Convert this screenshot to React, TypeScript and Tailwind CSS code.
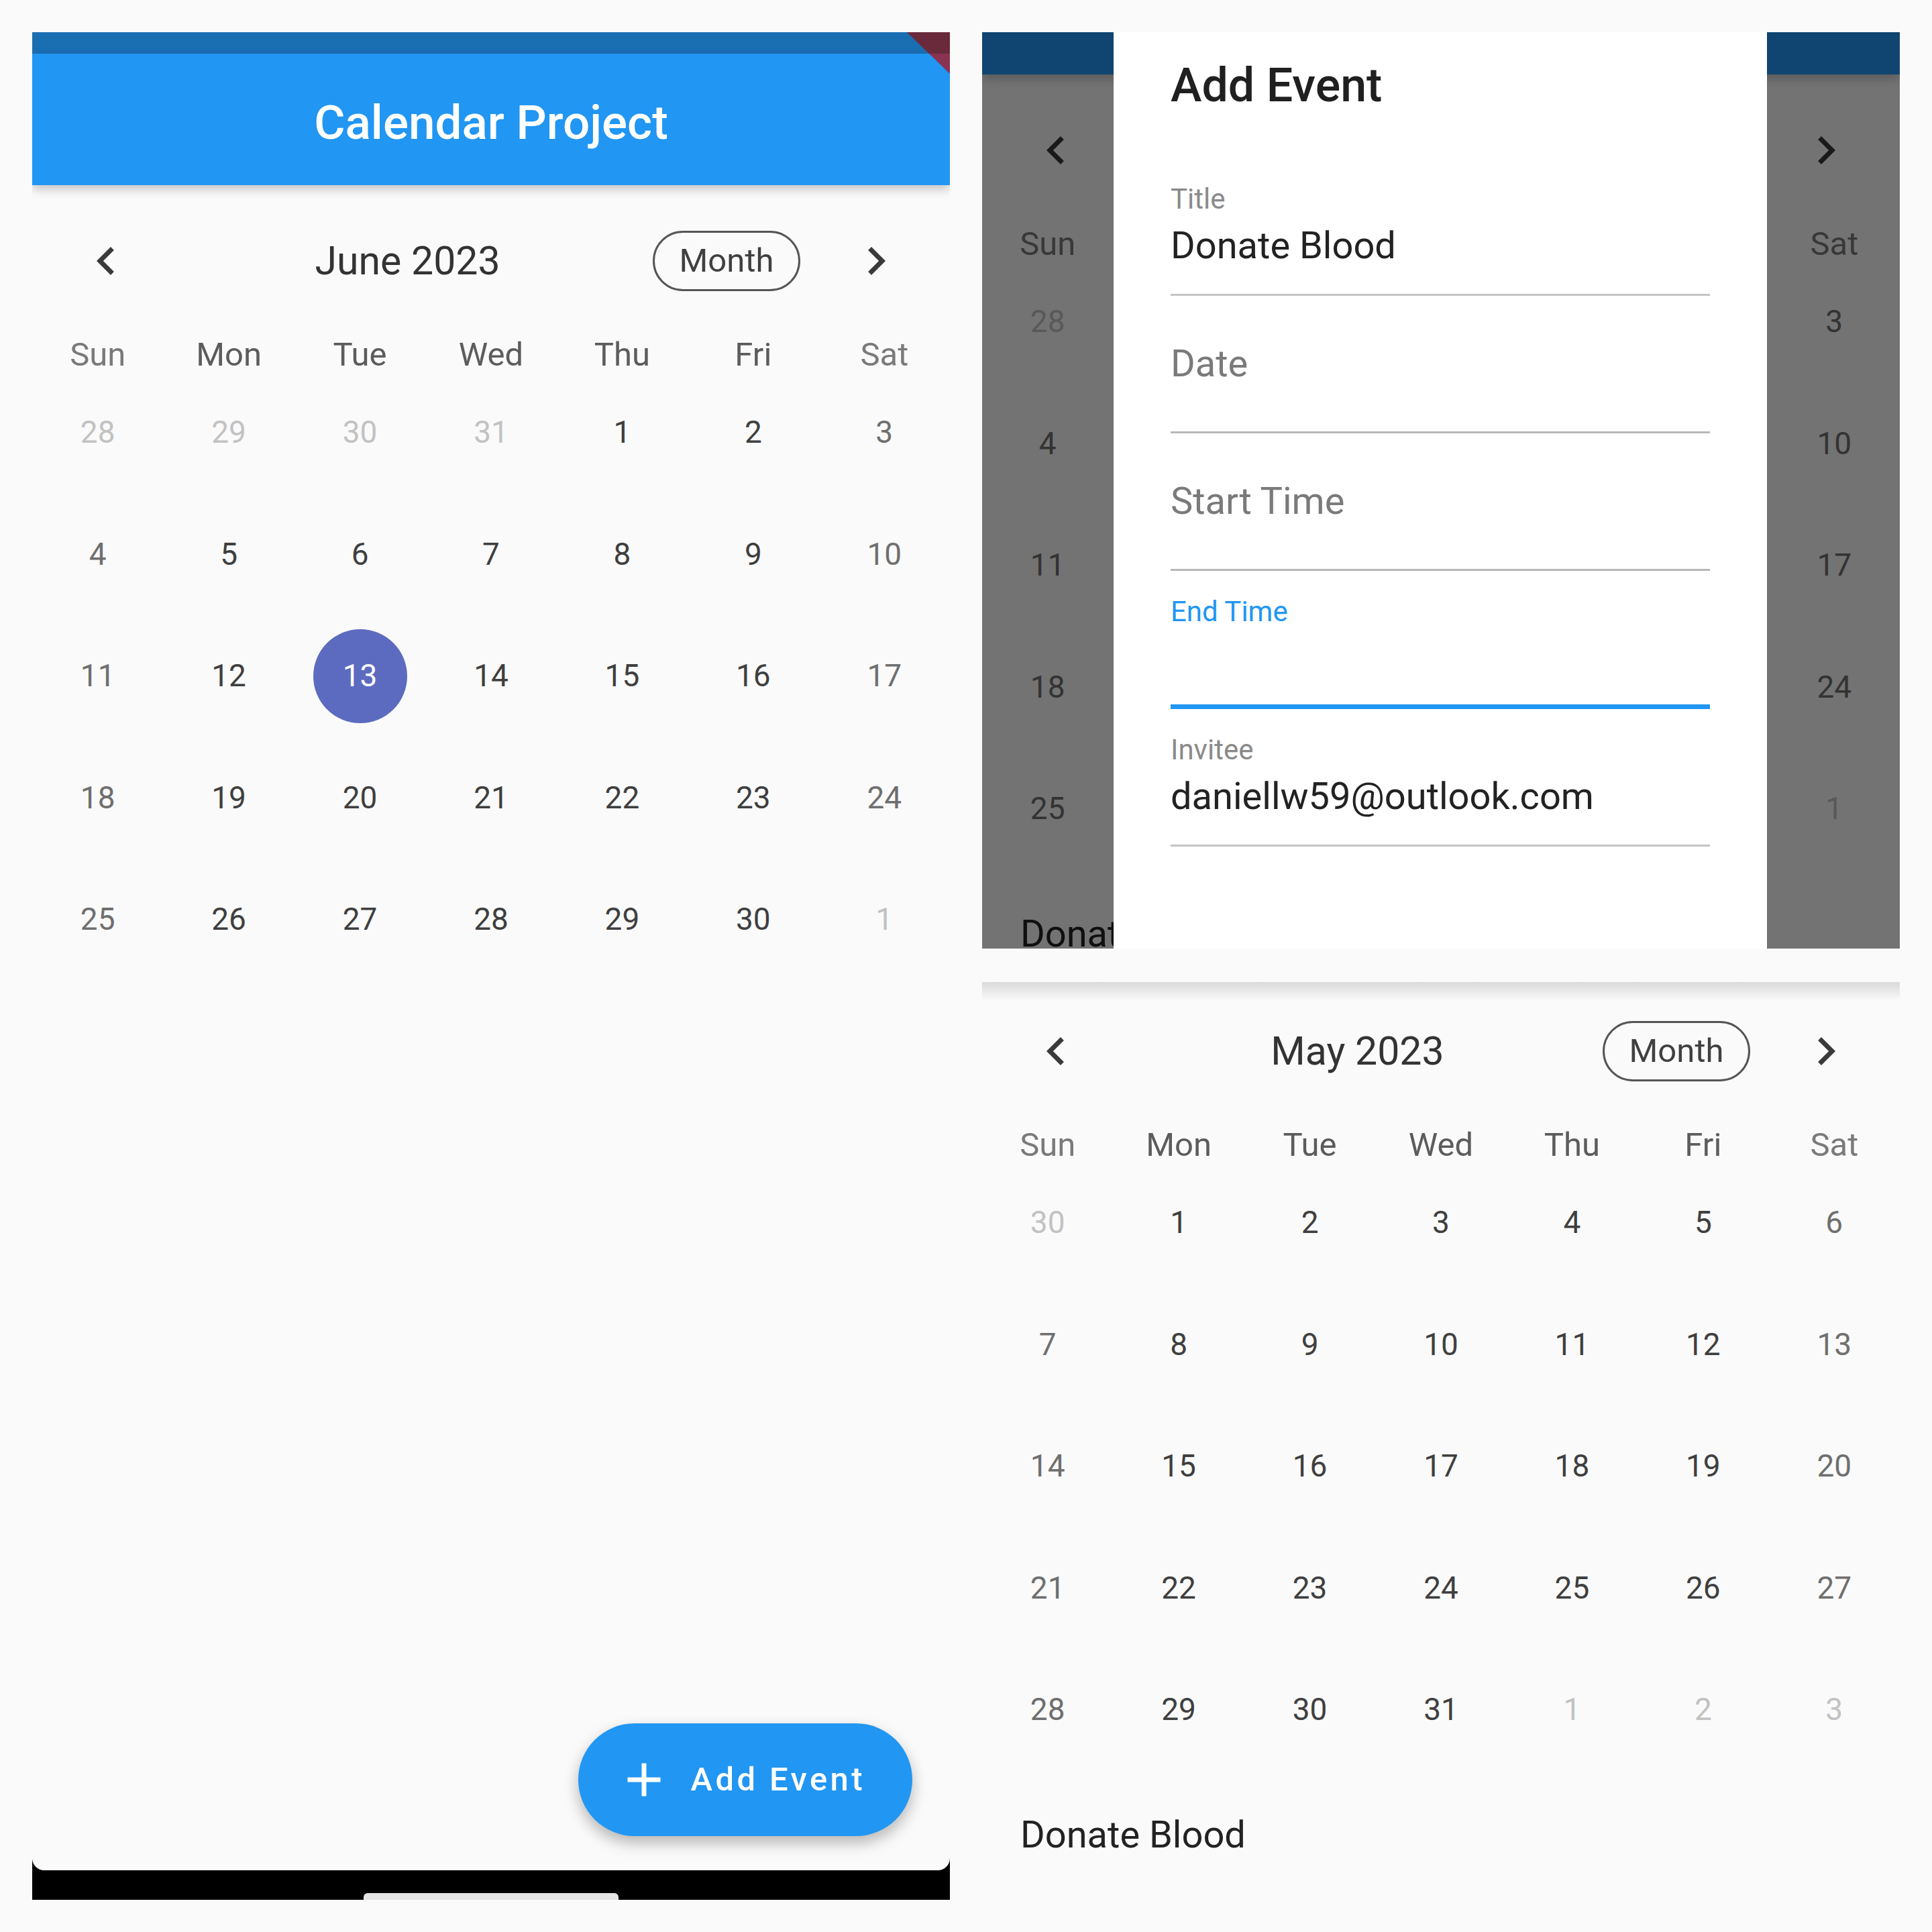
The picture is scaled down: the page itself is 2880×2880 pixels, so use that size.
import type { ReactNode } from 'react';

type Cell = { d: number; out?: boolean };

// builds the weeks of a month grid, Sunday first
function monthWeeks(prevLen: number, offset: number, len: number): Cell[][] {
  const cells: Cell[] = [];
  for (let i = offset; i > 0; i--) cells.push({ d: prevLen - i + 1, out: true });
  for (let d = 1; d <= len; d++) cells.push({ d });
  let n = 1;
  while (cells.length % 7) cells.push({ d: n++, out: true });
  const weeks: Cell[][] = [];
  for (let i = 0; i < cells.length; i += 7) weeks.push(cells.slice(i, i + 7));
  return weeks;
}

const JUNE = monthWeeks(31, 4, 30);
const MAY = monthWeeks(30, 1, 31);
const DAYS = ['Sun', 'Mon', 'Tue', 'Wed', 'Thu', 'Fri', 'Sat'];

function ChevronLeft() {
  return (
    <svg viewBox="0 0 24 24" className="h-[84px] w-[84px] fill-[#3a3a3a]">
      <path d="M15.41 7.41L14 6l-6 6 6 6 1.41-1.41L10.83 12z" />
    </svg>
  );
}

function ChevronRight() {
  return (
    <svg viewBox="0 0 24 24" className="h-[84px] w-[84px] fill-[#3a3a3a]">
      <path d="M10 6L8.59 7.41 13.17 12l-4.58 4.59L10 18l6-6z" />
    </svg>
  );
}

function Calendar({
  title,
  weeks,
  selected,
  event,
  covered,
  className,
}: {
  readonly title: string;
  readonly weeks: Cell[][];
  readonly selected?: number;
  readonly event?: string;
  readonly covered?: boolean; // middle columns sit under the dialog
  readonly className: string;
}) {
  const hide = (i: number) => (covered && i > 0 && i < 6 ? 'invisible' : '');
  return (
    <div className={className}>
      <div className="flex h-[100px] items-center px-[26px]">
        <div className="flex w-[168px] justify-center">
          <ChevronLeft />
        </div>
        <div className={`flex-1 text-center text-[59px] text-[#333333] ${covered ? 'invisible' : ''}`}>{title}</div>
        <div
          className={`flex h-[90px] w-[220px] items-center justify-center rounded-full border-[3px] border-[#555555] text-[49px] text-[#404040] ${covered ? 'invisible' : ''}`}
        >
          Month
        </div>
        <div className="ml-[29px] flex w-[168px] justify-center">
          <ChevronRight />
        </div>
      </div>
      <div className="mt-[65px] grid h-[50px] grid-cols-7 items-center text-center text-[49px] leading-[50px]">
        {DAYS.map((day, i) => (
          <span key={day} className={`${i === 0 || i === 6 ? 'text-[#7a7a7a]' : 'text-[#5c5c5c]'} ${hide(i)}`}>
            {day}
          </span>
        ))}
      </div>
      {weeks.map((week, w) => (
        <div key={w} className="grid grid-cols-7">
          {week.map((cell, i) => {
            const isSel = !cell.out && cell.d === selected;
            const tone = cell.out
              ? 'text-[#c2c2c2]'
              : i === 0 || i === 6
                ? 'text-[#6f6f6f]'
                : 'text-[#3f3f3f]';
            return (
              <div key={i} className={`flex h-[181.5px] items-center justify-center text-[46px] ${hide(i)}`}>
                {isSel ? (
                  <span className="flex h-[140px] w-[140px] items-center justify-center rounded-full bg-[#5c6bc0] text-white">
                    {cell.d}
                  </span>
                ) : (
                  <span className={tone}>{cell.d}</span>
                )}
              </div>
            );
          })}
        </div>
      ))}
      {event && (
        <p className="mt-[67px] pl-[57px] text-[56px] leading-[56px] text-[#222222]">
          {covered ? 'Donat' : event}
        </p>
      )}
    </div>
  );
}

function Field({
  label,
  value,
  state,
}: {
  readonly label: string;
  readonly value?: string;
  readonly state: 'filled' | 'empty' | 'focused';
}) {
  if (state === 'empty') {
    return (
      <div className="h-[205px] border-b-[3px] border-[#b8b8b8] pt-[73px] text-[56px] leading-[56px] text-[#7a7a7a]">
        {label}
      </div>
    );
  }
  const focused = state === 'focused';
  return (
    <div
      className={
        focused
          ? 'h-[206px] border-b-[7px] border-[#2196f3] pt-[40px]'
          : 'h-[205px] border-b-[3px] border-[#c4c4c4] pt-[40px]'
      }
    >
      <div className={focused ? 'text-[42px] leading-[42px] text-[#2196f3]' : 'text-[42px] leading-[42px] text-[#8a8a8a]'}>
        {label}
      </div>
      {value && <div className="mt-[20px] text-[56px] leading-[56px] text-[#222222]">{value}</div>}
    </div>
  );
}

function Panel({ children, className }: { readonly children: ReactNode; readonly className: string }) {
  return <section className={`relative w-[1368px] overflow-hidden bg-[#fafafa] ${className}`}>{children}</section>;
}

export default function App() {
  return (
    <div className="flex h-[2880px] w-[2880px] gap-[48px] bg-[#fafafa] p-[48px] font-['Roboto',sans-serif]">
      {/* phone 1: month view with the FAB */}
      <section className="relative flex h-[2784px] w-[1368px] flex-col overflow-hidden bg-black">
        <div className="h-[32px] bg-[#1a6fb3]" />
        <header className="relative z-10 flex h-[196px] items-center justify-center bg-[#2196f3] pt-[10px] shadow-[0_6px_14px_rgba(0,0,0,0.22)]">
          <h1 className="text-[71px] font-medium text-white">Calendar Project</h1>
        </header>
        <main className="relative flex-1 rounded-b-[18px] bg-[#fafafa]">
          <Calendar className="pt-[63px]" title="June 2023" weeks={JUNE} selected={13} />
          <button
            type="button"
            className="absolute bottom-[51px] right-[56px] flex h-[168px] items-center rounded-full bg-[#2196f3] pl-[56px] pr-[70px] shadow-[0_10px_22px_rgba(0,0,0,0.28)]"
          >
            <svg viewBox="0 0 24 24" className="h-[84px] w-[84px] fill-white">
              <path d="M19 13h-6v6h-2v-6H5v-2h6V5h2v6h6v2z" />
            </svg>
            <span className="ml-[28px] text-[49px] font-medium tracking-[4.4px] text-white">Add Event</span>
          </button>
        </main>
        <div className="flex h-[44px] items-end justify-center">
          <div className="h-[10px] w-[380px] rounded-t-[6px] bg-[#e4e4e4]" />
        </div>
        <svg viewBox="0 0 64 62" className="absolute right-0 top-0 z-20 h-[62px] w-[64px]">
          <polygon points="0,0 64,0 64,62" fill="#8a3251" />
          <polygon points="0,0 64,0 64,32 33,32" fill="#6a2a3c" />
        </svg>
      </section>

      <div className="flex flex-col gap-[50px]">
        {/* phone 2: add event dialog */}
        <Panel className="h-[1366px]">
          <div className="relative z-10 h-[63px] bg-[#2196f3] shadow-[0_6px_14px_rgba(0,0,0,0.22)]" />
          <Calendar className="pt-[63px]" title="June 2023" weeks={JUNE} event="Donate Blood" covered />
          <div className="absolute inset-0 z-20 bg-black/[0.54]" />
          <div className="absolute inset-y-0 left-[196px] z-30 w-[974px] bg-white px-[85px] pt-[44px]">
            <h2 className="text-[70px] font-medium leading-[70px] text-[#202020]">Add Event</h2>
            <div className="mt-[74px]">
              <Field label="Title" value="Donate Blood" state="filled" />
              <Field label="Date" state="empty" />
              <Field label="Start Time" state="empty" />
              <Field label="End Time" state="focused" />
              <Field label="Invitee" value="daniellw59@outlook.com" state="filled" />
            </div>
          </div>
        </Panel>

        {/* phone 3: May with the saved event */}
        <Panel className="h-[1368px]">
          <Calendar className="pt-[53px]" title="May 2023" weeks={MAY} event="Donate Blood" />
          <div className="absolute inset-x-0 top-0 h-[28px] bg-linear-to-b from-black/[0.13] to-transparent" />
        </Panel>
      </div>
    </div>
  );
}
